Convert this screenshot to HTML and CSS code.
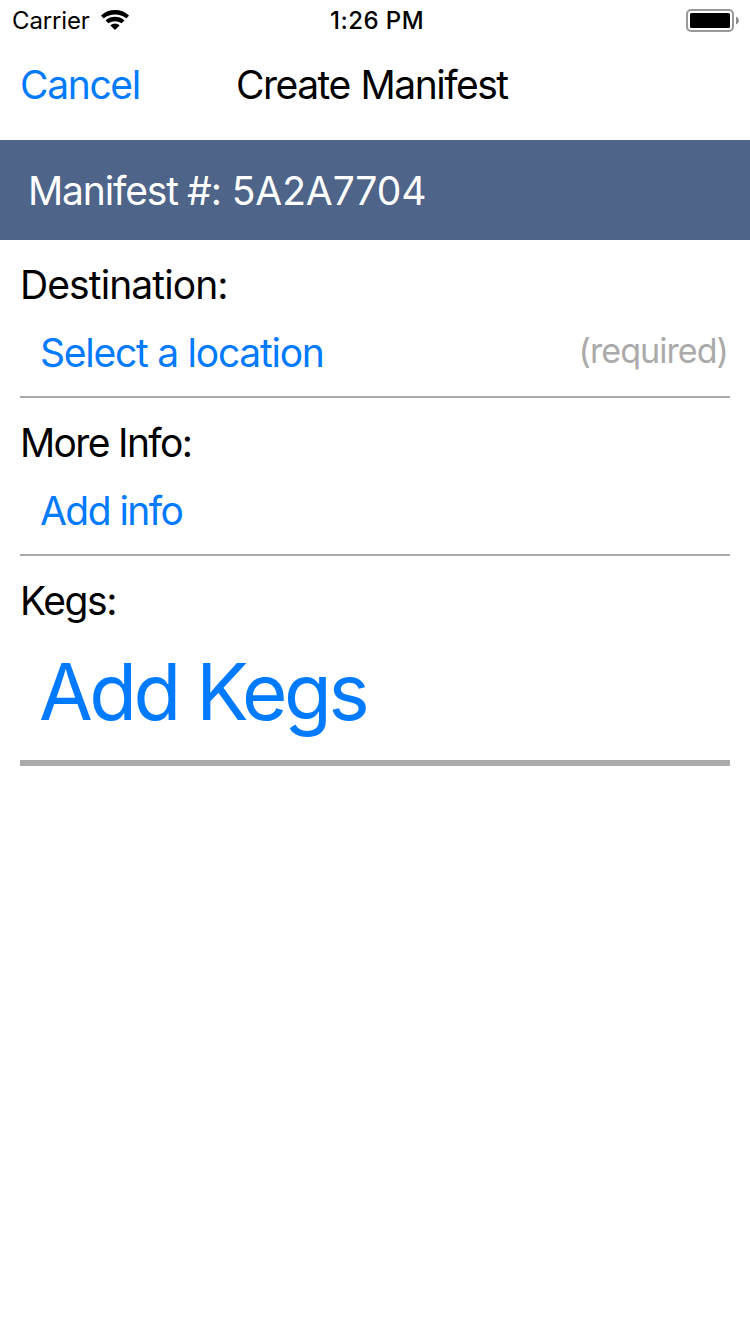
FILE: index.html
```html
<!DOCTYPE html>
<html lang="en">
<head>
<meta charset="utf-8">
<title>Create Manifest</title>
<link rel="stylesheet" href="styles.css">
</head>
<body>
<header class="status">
  <div class="carrier"><span class="carrier-name">Carrier</span>
    <svg class="wifi" width="28" height="20" viewBox="0 0 28 20"><path d="M.3 5.2Q6 0 14 0T27.7 5.2Q28 5.6 27.7 5.9L25.7 8Q25.3 8.4 24.8 8Q20.4 4.4 14 4.4T3.2 8Q2.7 8.4 2.3 8L.3 5.9Q0 5.6.3 5.2ZM5 10.1Q8.8 6.8 14 6.8T23 10.1Q23.4 10.500 23 10.900L20.900 13Q20.500 13.300 20 13Q17.500 11.300 14 11.300T8 13Q7.500 13.300 7.100 13L5 10.900Q4.600 10.500 5 10.100ZM9.700 15Q11.600 13.400 14 13.400T18.300 15Q18.700 15.400 18.300 15.800L14.500 19.500Q14 20 13.500 19.500L9.700 15.800Q9.300 15.400 9.700 15Z"/></svg>
  </div>
  <span class="time">1:26 PM</span>
  <svg class="battery" width="54" height="23" viewBox="0 0 54 23"><rect x="1" y="1" width="46" height="21" rx="4" fill="#fff" stroke="#999" stroke-width="2"/><rect x="4" y="4" width="40" height="15" rx="1.5"/><path d="M50 7.500Q53 9 53 11.500T50 15.500Z" fill="#8c8c8c"/></svg>
</header>
<nav class="nav"><a class="cancel">Cancel</a><h1 class="title">Create Manifest</h1></nav>
<div class="banner"><span class="prefix">Manifest #:</span> <span class="number">5A2A7704</span></div>
<main class="form">
  <section class="group"><h2 class="label"><span class="destination">Destination:</span></h2><div class="row"><a class="select">Select a location</a><span class="required">(required)</span></div></section>
  <section class="group"><h2 class="label"><span class="more">More Info:</span></h2><div class="row"><a class="info">Add info</a></div></section>
  <section class="group kegs"><h2 class="label"><span class="kegs-label">Kegs:</span></h2><div class="row large"><a class="add">Add Kegs</a></div></section>
</main>
</body>
</html>
```
FILE: styles.css
```css
body { margin: 0; background: #fff; color: #000; font-family: Inter, sans-serif; font-size: 39px; }
.status { display: grid; grid-template-columns: 330px 1fr 54px; height: 40px; padding: 0 10px 0 12px; box-sizing: border-box; align-items: center; }
.carrier { display: flex; align-items: center; gap: 11px; }
.carrier-name { font-size: 24px; letter-spacing: -0.15px; }
.time { font-size: 24px; font-weight: 550; letter-spacing: 0.45px; margin-left: -12px; }
.nav { height: 100px; display: flex; box-sizing: border-box; padding: 22px 20px 0; line-height: 46px; }
.cancel { width: 216px; letter-spacing: -1.35px; }
.cancel, .select, .info, .add { color: #007aff; }
.title, .label { margin: 0; font-size: 39px; font-weight: 400; }
.title { letter-spacing: -1.5px; word-spacing: 1.5px; }
.banner { height: 100px; line-height: 100px; padding: 1px 0 0 28px; box-sizing: border-box; background: #4e6489; color: #fff; }
.prefix { letter-spacing: -1.15px; word-spacing: -0.5px; }
.number { letter-spacing: -0.1px; }
.form { padding: 0 20px; }
.group { height: 158px; box-sizing: border-box; padding-top: 22px; border-bottom: 2px solid #aaa; line-height: 46px; }
.label { line-height: 46px; }
.destination { letter-spacing: -0.9px; }
.more { letter-spacing: -1.65px; }
.kegs-label { letter-spacing: -1.4px; }
.select { letter-spacing: -1.25px; }
.info { letter-spacing: -1.55px; }
.row { display: flex; justify-content: space-between; padding: 22px 2px 0 20px; }
.required { color: #aaa; font-size: 34px; line-height: 42px; letter-spacing: -0.95px; }
.kegs { height: 210px; border-bottom-width: 6px; }
.large { font-size: 78px; line-height: 92px; padding-top: 22px; padding-left: 19px; }
.add { letter-spacing: -3.5px; }
```
